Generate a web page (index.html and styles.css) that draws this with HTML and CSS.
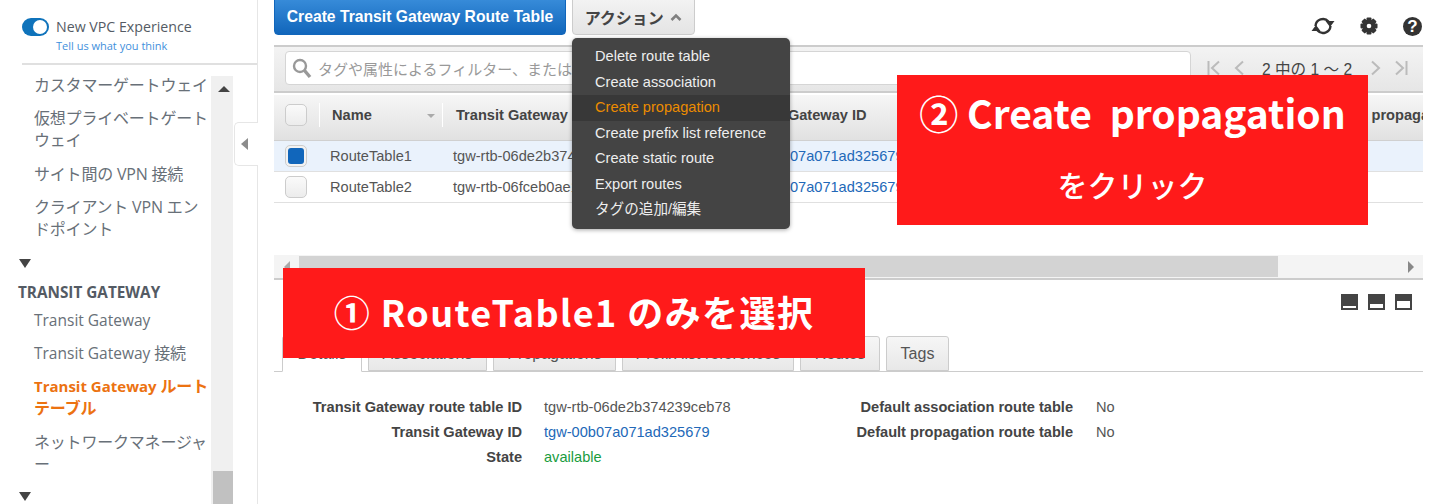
FILE: index.html
```html
<!DOCTYPE html>
<html lang="ja">
<head>
<meta charset="utf-8">
<title>Transit Gateway Route Tables</title>
<link rel="stylesheet" href="styles.css">
</head>
<body>
<div class="page">
  <aside class="sidebar">
    <div class="exp">
      <span class="toggle"><span class="knob"></span></span>
      <div class="exp-text">
        <div class="exp-title">New VPC Experience</div>
        <a class="exp-link">Tell us what you think</a>
      </div>
    </div>
    <div class="nav-wrap">
      <nav class="nav">
        <div class="nav-item">カスタマーゲートウェイ</div>
        <div class="nav-item">仮想プライベートゲートウェイ</div>
        <div class="nav-item">サイト間の VPN 接続</div>
        <div class="nav-item">クライアント VPN エンドポイント</div>
        <div class="nav-arrow"></div>
        <div class="nav-head">TRANSIT GATEWAY</div>
        <div class="nav-item"><span class="latin">Transit Gateway</span></div>
        <div class="nav-item"><span class="latin">Transit Gateway</span> 接続</div>
        <div class="nav-item active"><span class="latin">Transit Gateway</span> ルートテーブル</div>
        <div class="nav-item">ネットワークマネージャー</div>
        <div class="nav-arrow last"></div>
      </nav>
      <div class="nav-scroll">
        <span class="nav-up"></span>
        <span class="nav-thumb"></span>
      </div>
    </div>
    <div class="collapse"><span class="collapse-arrow"></span></div>
  </aside>

  <main class="main">
    <div class="toolbar">
      <button class="btn-primary">Create Transit Gateway Route Table</button>
      <button class="btn-action">アクション
        <svg class="caret-up" width="12" height="8" viewBox="0 0 12 8"><path d="M1.500 7 6 2.500 10.500 7" fill="none" stroke="#808080" stroke-width="2.600"/></svg>
      </button>
      <div class="tools">
        <svg width="24" height="22" viewBox="0 0 24 22"><path d="M4.500 11A7.500 7.500 0 0 1 17.500 6.500M19.500 11A7.500 7.500 0 0 1 6.500 15.500" fill="none" stroke="#333" stroke-width="2.400"/><path d="M14.500 6h9l-4.500 6zM9.500 16h-9l4.500-6z" fill="#333"/></svg>
        <svg width="18" height="18" viewBox="0 0 18 18"><g fill="#333"><circle cx="9" cy="9" r="6.500"/><rect x="6.500" y="0.500" width="5" height="17" rx="1"/><rect x="6.500" y="0.500" width="5" height="17" rx="1" transform="rotate(45 9 9)"/><rect x="6.500" y="0.500" width="5" height="17" rx="1" transform="rotate(90 9 9)"/><rect x="6.500" y="0.500" width="5" height="17" rx="1" transform="rotate(135 9 9)"/></g><circle cx="9" cy="9" r="2.300" fill="#fff"/></svg>
        <span class="help">?</span>
      </div>
    </div>

    <div class="filter">
      <div class="search">
        <svg width="20" height="21" viewBox="0 0 20 21"><circle cx="8" cy="8" r="6" fill="none" stroke="#999" stroke-width="2.400"/><path d="M12.500 12.500 18 19" stroke="#999" stroke-width="3.400"/></svg>
        <span class="placeholder">タグや属性によるフィルター、またはキーワードで検索</span>
      </div>
      <div class="pager">
        <svg width="14" height="16" viewBox="0 0 14 16"><path d="M1.500 1v14M12 1.500 5 8l7 6.500" fill="none" stroke="#bbb" stroke-width="2"/></svg>
        <svg width="10" height="16" viewBox="0 0 10 16"><path d="M9 1.500 2 8l7 6.500" fill="none" stroke="#bbb" stroke-width="2"/></svg>
        <span class="pager-text">2 中の 1 〜 2</span>
        <svg width="10" height="16" viewBox="0 0 10 16"><path d="M1 1.500 8 8l-7 6.500" fill="none" stroke="#bbb" stroke-width="2"/></svg>
        <svg width="14" height="16" viewBox="0 0 14 16"><path d="M12.500 1v14M2 1.500 9 8l-7 6.500" fill="none" stroke="#bbb" stroke-width="2"/></svg>
      </div>
    </div>

    <div class="table">
      <div class="thead">
        <div class="c-check"><span class="box"></span></div>
        <div class="th c-name">Name<span class="sort"></span></div>
        <div class="th c-id">Transit Gateway route table ID</div>
        <div class="th c-tgw">Transit Gateway ID</div>
        <div class="th c-assoc">Default association route table</div>
        <div class="th c-prop">Default propagation route table</div>
      </div>
      <div class="row selected">
        <div class="c-check"><span class="box on"><span class="box-fill"></span></span></div>
        <div class="td c-name">RouteTable1</div>
        <div class="td c-id">tgw-rtb-06de2b374239ceb78</div>
        <div class="td c-tgw link">tgw-00b07a071ad325679</div>
        <div class="td c-assoc"></div>
        <div class="td c-prop"></div>
      </div>
      <div class="row">
        <div class="c-check"><span class="box"></span></div>
        <div class="td c-name">RouteTable2</div>
        <div class="td c-id">tgw-rtb-06fceb0ae1a2c3d45</div>
        <div class="td c-tgw link">tgw-00b07a071ad325679</div>
        <div class="td c-assoc"></div>
        <div class="td c-prop"></div>
      </div>
    </div>

    <div class="hscroll">
      <span class="hs-left"></span>
      <span class="hs-thumb"></span>
      <span class="hs-right"></span>
    </div>

    <div class="panel-tools">
      <span class="pt pt1"><span></span></span>
      <span class="pt pt2"><span></span></span>
      <span class="pt pt3"><span></span></span>
    </div>

    <div class="tabs">
      <span class="tab current">Details</span>
      <span class="tab t-assoc">Associations</span>
      <span class="tab t-prop">Propagations</span>
      <span class="tab t-prefix">Prefix list references</span>
      <span class="tab t-routes">Routes</span>
      <span class="tab t-tags">Tags</span>
    </div>

    <div class="details">
      <div class="dl dl-left">
        <span class="dt">Transit Gateway route table ID</span><span class="dd">tgw-rtb-06de2b374239ceb78</span>
        <span class="dt">Transit Gateway ID</span><span class="dd link">tgw-00b07a071ad325679</span>
        <span class="dt">State</span><span class="dd ok">available</span>
      </div>
      <div class="dl dl-right">
        <span class="dt">Default association route table</span><span class="dd">No</span>
        <span class="dt">Default propagation route table</span><span class="dd">No</span>
      </div>
    </div>
  </main>

  <div class="menu">
    <div class="mi">Delete route table</div>
    <div class="mi">Create association</div>
    <div class="mi hover">Create propagation</div>
    <div class="mi">Create prefix list reference</div>
    <div class="mi">Create static route</div>
    <div class="mi">Export routes</div>
    <div class="mi">タグの追加/編集</div>
  </div>

  <div class="note note-one">① RouteTable1 のみを選択</div>
  <div class="note note-two">
    <div class="n2-main">② Create&nbsp; propagation</div>
    <div class="n2-sub">をクリック</div>
  </div>
</div>
</body>
</html>
```
FILE: styles.css
```css
* { box-sizing: border-box; }
html, body { margin: 0; padding: 0; background: #fff; }
body { width: 1434px; height: 504px; overflow: hidden; font-family: "Liberation Sans", Arial, "Noto Sans CJK JP", sans-serif; font-size: 14.6px; color: #444; }
.page { position: relative; display: flex; width: 1434px; height: 504px; overflow: hidden; }

/* sidebar */
.sidebar { position: relative; flex: 0 0 258px; height: 504px; border-right: 1px solid #e6e6e6; display: flex; flex-direction: column; font-family: "Open Sans", "Noto Sans CJK JP", sans-serif; }
.exp { margin-left: 22px; height: 65px; padding-top: 15px; border-bottom: 2px solid #e0e0e0; display: flex; gap: 7px; }
.toggle { width: 27px; height: 18px; margin-top: 3px; border-radius: 9px; background: #0f73bb; display: block; position: relative; flex: none; }
.knob { position: absolute; right: 2px; top: 2px; width: 14px; height: 14px; border-radius: 50%; background: #fff; }
.exp-title { font-size: 14.200px; line-height: 24px; color: #545b64; }
.exp-link { display: block; font-size: 11px; line-height: 14px; color: #3f8fdc; }
.nav-wrap { flex: 1; display: flex; min-height: 0; padding-top: 11px; }
.nav { width: 211px; height: 430px; overflow: hidden; flex: none; margin-top: -2px; }
.nav-item { padding: 0 0 0 34px; margin-bottom: 11.300px; font-size: 16px; line-height: 22px; letter-spacing: -0.2px; color: #687078; line-break: anywhere; }
.latin { font-size: 15.500px; letter-spacing: 0; }
.nav-item.active { color: #ec7211; font-weight: 700; }
.nav-item.active .latin { font-size: 15px; }
.nav-arrow { width: 0; height: 0; margin: 19px 0 14px 19px; border-left: 6px solid transparent; border-right: 6px solid transparent; border-top: 9px solid #444; }
.nav-arrow.last { margin-top: 17px; }
.nav-head { padding-left: 18px; font-size: 15.300px; line-height: 20px; font-weight: 700; color: #545b64; margin-bottom: 7px; }
.nav-scroll { position: relative; width: 22px; height: 430px; background: #f0f0f0; flex: none; display: flex; flex-direction: column; align-items: flex-end; justify-content: space-between; }
.nav-up { width: 0; height: 0; margin: 10px 3px 0 0; border-left: 6px solid transparent; border-right: 6px solid transparent; border-bottom: 6px solid #444; }
.nav-thumb { width: 20px; height: 35px; background: #c1c1c1; }
.collapse { position: absolute; left: 234px; top: 122px; width: 24px; height: 44px; background: #fff; border: 1px solid #e6e6e6; border-right: 0; border-radius: 5px 0 0 5px; display: flex; align-items: center; justify-content: center; }
.collapse-arrow { width: 0; height: 0; border-top: 6px solid transparent; border-bottom: 6px solid transparent; border-right: 7px solid #8c8c8c; margin-right: 4px; }

/* main */
.main { flex: 0 0 1149px; min-width: 0; overflow: hidden; margin-left: 16px; display: flex; flex-direction: column; height: 504px; }
.toolbar { height: 45px; display: flex; align-items: flex-start; flex: none; }
button { font-family: inherit; cursor: pointer; }
.btn-primary { margin-top: -5px; width: 292px; height: 40px; padding: 3px 0 0; border: 1px solid #1166bb; border-radius: 4px; background: linear-gradient(#3b8fdc, #1166bb); color: #fff; font-size: 15.700px; font-weight: 700; }
.btn-action { margin: -5px 0 0 6px; width: 123px; height: 40px; padding: 3px 0 0; border: 1px solid #ccc; border-radius: 4px; background: linear-gradient(#f4f4f4, #e4e4e4); color: #444; font-size: 16px; font-weight: 700; font-family: "Liberation Sans", "Noto Sans CJK JP", sans-serif; }
.caret-up { margin-left: 2px; vertical-align: 3px; }
.tools { margin-left: auto; margin-top: 15px; margin-right: 1px; display: flex; align-items: center; gap: 25px; height: 22px; }
.help { width: 19px; height: 19px; border-radius: 50%; background: #333; color: #fff; font-size: 17px; font-weight: 700; line-height: 19px; text-align: center; }
.filter { height: 48px; flex: none; border-top: 2px solid #ccc; border-bottom: 2px solid #ccc; background: linear-gradient(#f3f3f3, #e6e6e6); display: flex; padding: 4px 0 0 11px; }
.search { width: 906px; height: 34px; background: #fff; border: 1px solid #d5d5d5; border-radius: 4px; display: flex; align-items: center; padding-left: 6px; gap: 6px; overflow: hidden; flex: none; }
.placeholder { font-size: 15px; color: #999; white-space: nowrap; font-family: "Noto Sans CJK JP", sans-serif; }
.pager { margin-left: 16px; display: flex; align-items: center; height: 34px; gap: 13px; flex: none; }
.pager-text { font-size: 15.600px; color: #444; white-space: nowrap; margin: 0 6px 0 5px; }

/* table */
.table { margin-top: 2px; flex: none; }
.thead { display: flex; height: 46px; padding-bottom: 5px; background: linear-gradient(#f6f6f6, #e1e1e1); border-bottom: 1px solid #d0d0d0; align-items: center; overflow: hidden; }
.row { display: flex; height: 31px; border-bottom: 1px solid #e0e0e0; align-items: center; overflow: hidden; }
.row.selected { background: #eaf2fc; }
.c-check { flex: 0 0 45px; padding-left: 11px; display: flex; align-items: center; height: 24px; }
.box { width: 22px; height: 22px; display: block; background: linear-gradient(#fafafa, #ececec); border: 1px solid #ccc; border-radius: 5px; padding: 2px; }
.box-fill { display: block; width: 16px; height: 16px; background: #1166bb; border-radius: 3px; }
.box.on { background: #f2f2f2; }
.th { font-weight: 700; color: #444; height: 24px; line-height: 24px; border-left: 1px solid #fff; white-space: nowrap; overflow: hidden; position: relative; }
.td { white-space: nowrap; overflow: hidden; color: #555; }
.c-name { flex: 0 0 123px; }
.c-id { flex: 0 0 282px; }
.c-tgw { flex: 0 0 298px; }
.c-assoc { flex: 0 0 282px; }
.c-prop { flex: 0 0 300px; }
.thead .c-name { padding-left: 12px; }
.thead .c-id, .thead .c-assoc, .thead .c-prop { padding-left: 13px; }
.thead .c-tgw { padding-left: 11px; }
.row .c-name { padding-left: 11px; }
.row .c-id { padding-left: 11px; }
.row .c-tgw { padding-left: 14px; }
.sort { position: absolute; right: 7px; top: 11px; width: 0; height: 0; border-left: 4px solid transparent; border-right: 4px solid transparent; border-top: 4px solid #aaa; }
.link { color: #2268b8; }
.ok { color: #1a9c3e; }

.hscroll { margin-top: 52px; height: 25px; flex: none; background: #f4f4f4; border-bottom: 2px solid #ccc; display: flex; align-items: center; }
.hs-left { width: 0; height: 0; margin-left: 10px; border-top: 6px solid transparent; border-bottom: 6px solid transparent; border-right: 6px solid #aaa; }
.hs-thumb { width: 979px; height: 21px; margin-left: 9px; background: #d3d3d3; }
.hs-right { width: 0; height: 0; margin-left: 130px; border-top: 6px solid transparent; border-bottom: 6px solid transparent; border-left: 6px solid #888; }

.panel-tools { display: flex; justify-content: flex-end; gap: 10px; padding: 14px 11px 0 0; height: 56px; flex: none; }
.pt { width: 17px; height: 16px; background: #444; display: flex; align-items: flex-end; justify-content: center; padding-bottom: 2px; }
.pt span { display: block; width: 13px; background: #fff; }
.pt1 span { height: 2px; }
.pt2 span { height: 4px; }
.pt3 span { height: 7px; }

.tabs { height: 36px; flex: none; border-bottom: 1px solid #ccc; display: flex; padding-left: 8px; gap: 6px; }
.tab { height: 35px; border: 1px solid #ccc; border-radius: 3px 3px 0 0; background: linear-gradient(#f6f6f6, #e8e8e8); display: flex; align-items: center; justify-content: center; color: #555; font-size: 16px; }
.tab.current { width: 80px; height: 36px; background: #fff; border-bottom-color: #fff; }
.t-assoc { width: 119px; }
.t-prop { width: 123px; }
.t-prefix { width: 172px; }
.t-routes { width: 80px; }
.t-tags { width: 63px; }

.details { display: flex; padding-top: 27px; }
.dl { display: grid; row-gap: 9px; column-gap: 22px; line-height: 16px; align-content: start; }
.dl-left { grid-template-columns: 248px 300px; }
.dl-right { grid-template-columns: 229px 100px; column-gap: 23px; }
.dt { text-align: right; font-weight: 700; color: #444; }
.dd { color: #555; }
.dd.link { color: #2268b8; }
.dd.ok { color: #1a9c3e; }

/* overlays */
.menu { position: absolute; left: 572px; top: 38px; width: 218px; height: 191px; padding-top: 6px; background: #444; border-radius: 5px; box-shadow: 0 1px 4px rgba(0,0,0,.35); }
.mi { height: 25.500px; line-height: 25.500px; padding-left: 23px; color: #eee; font-size: 14.600px; font-family: "Liberation Sans", "Noto Sans CJK JP", sans-serif; }
.mi.hover { background: #383838; color: #ec8c00; }
.note { position: absolute; background: #ff1a1a; color: #fff; font-family: "Noto Sans CJK JP", sans-serif; font-weight: 700; display: flex; flex-direction: column; align-items: center; white-space: nowrap; }
.note-one { left: 283px; top: 268px; width: 582px; height: 90px; font-size: 36px; line-height: 87px; letter-spacing: 1.400px; }
.note-two { left: 897px; top: 75px; width: 471px; height: 150px; padding-top: 9px; }
.n2-main { font-size: 39px; line-height: 56px; }
.n2-sub { font-size: 30px; line-height: 44px; margin-top: 22px; font-weight: 500; }
```
